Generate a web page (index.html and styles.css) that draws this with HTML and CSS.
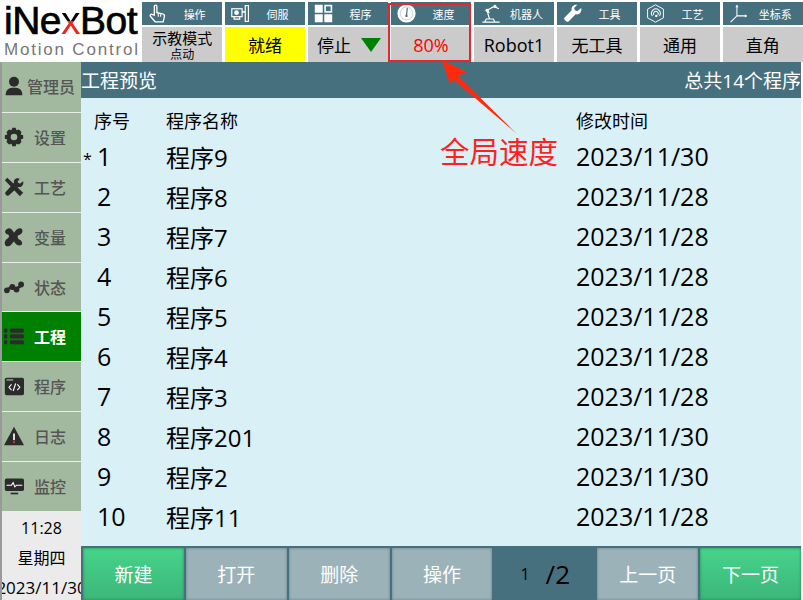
FILE: index.html
```html
<!DOCTYPE html>
<html>
<head>
  <meta charset="UTF-8">
  <meta name="viewport" content="width=device-width, initial-scale=1.0">
  <link rel="stylesheet" href="styles.css">
  <title>工程预览</title>
</head>
<body>
  <div class="app">
    <!-- top bar -->
    <div class="top">
      <div class="logo">
        <div class="logo-name">iNe<span class="logo-x">x</span>Bot</div>
        <div class="logo-sub">Motion Control</div>
      </div>
      <div class="cells">
        <div class="cell">
          <div class="cell-head">
            <svg class="head-icon" viewBox="0 0 24 24"><path d="M8 14V3a1.6 1.6 0 0 1 3.2 0v8l7 1.500c2 .5 3 1.500 2.500 3.500l-1.500 6.500H9l-6-7c-1-1.500 1-3.500 3-2z" fill="none" stroke="#fff" stroke-width="1.700"/><path d="M13 12v4M16 13v3" stroke="#fff" stroke-width="1.400"/></svg>
            <span>操作</span>
          </div>
          <div class="cell-val mode"><span>示教模式</span><small>点动</small></div>
        </div>
        <div class="cell">
          <div class="cell-head">
            <svg class="head-icon" viewBox="0 0 24 24"><rect x="1" y="6" width="13" height="10" fill="none" stroke="#fff" stroke-width="1.500"/><circle cx="7" cy="11" r="3" fill="#fff"/><path d="M4 16v3h7v-3" fill="none" stroke="#fff" stroke-width="1.500"/><rect x="18" y="2" width="4" height="20" fill="none" stroke="#fff" stroke-width="1.500"/><path d="M14 10h4" stroke="#fff" stroke-width="2"/></svg>
            <span>伺服</span>
          </div>
          <div class="cell-val ready">就绪</div>
        </div>
        <div class="cell">
          <div class="cell-head">
            <svg class="head-icon" viewBox="0 0 24 24"><path d="M1 1h10v10H1zM1 13h10v10H1zM13 13h10v10H13z" fill="#fff"/><rect x="14" y="2" width="8" height="8" fill="none" stroke="#fff" stroke-width="2"/></svg>
            <span>程序</span>
          </div>
          <div class="cell-val run">停止<svg class="run-arrow" viewBox="0 0 20 14"><path d="M0 0h20L10 14z" fill="#008000"/></svg></div>
        </div>
        <div class="cell">
          <div class="cell-head">
            <svg class="head-icon" viewBox="0 0 24 24"><circle cx="12" cy="12" r="11.500" fill="#fff"/><circle cx="12" cy="12" r="8" fill="none" stroke="#bcc9ce" stroke-width="1"/><path d="M12 14l1-9" stroke="#47707f" stroke-width="1.500"/><circle cx="12" cy="15" r="1.500" fill="#47707f"/></svg>
            <span>速度</span>
          </div>
          <div class="cell-val speed">80%</div>
        </div>
        <div class="cell">
          <div class="cell-head">
            <svg class="head-icon wide" viewBox="0 0 28 24"><path d="M3 23h22M6 23l2-4h9l2 4M12 19l-3-11 9-5 6 3M9 8l3 3" fill="none" stroke="#fff" stroke-width="1.500"/><circle cx="19" cy="3" r="2" fill="#fff"/><circle cx="9" cy="8" r="2" fill="#fff"/></svg>
            <span>机器人</span>
          </div>
          <div class="cell-val latin">Robot1</div>
        </div>
        <div class="cell">
          <div class="cell-head">
            <svg class="head-icon" viewBox="0 0 24 24"><path d="M23 5l-5 4-3-1-1-3 4-4c-4-1-8 2-7 7L2 17c-2 2 3 7 5 5l9-9c5 1 8-3 7-8z" fill="#fff"/></svg>
            <span>工具</span>
          </div>
          <div class="cell-val">无工具</div>
        </div>
        <div class="cell">
          <div class="cell-head">
            <svg class="head-icon" viewBox="0 0 24 24"><path d="M12 1l10 5.500v11L12 23 2 17.500v-11z" fill="none" stroke="#fff" stroke-width="1.200"/><path d="M8 15a5.500 5.500 0 1 1 9 0M10 14a3 3 0 1 1 5 0" fill="none" stroke="#fff" stroke-width="1.300"/><circle cx="13" cy="15" r="1.500" fill="#fff"/></svg>
            <span>工艺</span>
          </div>
          <div class="cell-val">通用</div>
        </div>
        <div class="cell">
          <div class="cell-head">
            <svg class="head-icon" viewBox="0 0 24 24"><path d="M10 2v13L2 23M10 15h12" fill="none" stroke="#fff" stroke-width="1.300"/><path d="M8 4l2-3 2 3zM20 13l3 2-3 2z" fill="#fff"/></svg>
            <span>坐标系</span>
          </div>
          <div class="cell-val">直角</div>
        </div>
      </div>
    </div>

    <div class="middle">
      <!-- left menu -->
      <div class="side">
        <div class="menu first">
          <svg class="menu-icon" viewBox="0 0 24 24"><circle cx="12" cy="7" r="6"/><path d="M2 23c0-7 4-9 10-9s10 2 10 9z"/></svg>
          <span class="label-admin">管理员</span>
        </div>
        <div class="menu">
          <svg class="menu-icon" viewBox="0 0 24 24"><path fill-rule="evenodd" d="M10 1h4l1 3 3-1 3 3-1 3 3 1v4l-3 1 1 3-3 3-3-1-1 3h-4l-1-3-3 1-3-3 1-3-3-1v-4l3-1-1-3 3-3 3 1zM12 8a4 4 0 1 0 0 8 4 4 0 0 0 0-8z"/></svg>
          <span>设置</span>
        </div>
        <div class="menu">
          <svg class="menu-icon" viewBox="0 0 24 24"><path d="M1 4l3-3 19 18-4 4z"/><path d="M23 5l-4 3-3-2 3-4c-4-2-8 1-7 5L2 18c-2 2 2 6 4 4L17 12c4 1 7-3 6-7z"/></svg>
          <span>工艺</span>
        </div>
        <div class="menu">
          <svg class="menu-icon" viewBox="0 0 24 24"><path d="M4 2c3-2 6 1 8 5 2-3 5-7 9-5 3 3 0 7-4 8-1 2-1 3 1 5 4 1 5 6 2 7-3 1-7-2-8-5-2 2-4 7-9 6-3-1-3-7 1-9 2-1 3-3 1-5-3 0-6-4-1-7z"/></svg>
          <span>变量</span>
        </div>
        <div class="menu">
          <svg class="menu-icon" viewBox="0 0 24 24"><path d="M3 17c3-5 6-5 9-3 3 1 6-2 9-4" fill="none" stroke="#2b2b2b" stroke-width="3"/><circle cx="3.500" cy="16" r="3.500"/><circle cx="10" cy="12" r="3.500"/><circle cx="15" cy="15" r="3.500"/><circle cx="20.500" cy="9" r="3.500"/></svg>
          <span>状态</span>
        </div>
        <div class="menu active">
          <svg class="menu-icon" viewBox="0 0 24 24"><rect x="0" y="3" width="4" height="5" rx="1"/><rect x="7" y="3" width="17" height="5" rx="2"/><rect x="0" y="10" width="4" height="5" rx="1"/><rect x="7" y="10" width="17" height="5" rx="2"/><rect x="0" y="17" width="4" height="5" rx="1"/><rect x="7" y="17" width="17" height="5" rx="2"/></svg>
          <span>工程</span>
        </div>
        <div class="menu">
          <svg class="menu-icon" viewBox="0 0 24 24"><rect x="1" y="2" width="23" height="21" rx="2"/><rect x="3" y="4" width="8" height="1.500" fill="#a2b9a0"/><path d="M9 10l-3 3.500 3 3.500M16 10l3 3.500-3 3.500M14 9l-3 9" fill="none" stroke="#fff" stroke-width="1.300"/></svg>
          <span>程序</span>
        </div>
        <div class="menu">
          <svg class="menu-icon" viewBox="0 0 24 24"><path d="M12 1l12 22H0z"/><rect x="11" y="9" width="2" height="8" fill="#fff"/><rect x="11" y="18.500" width="2" height="2" fill="#f33"/></svg>
          <span>日志</span>
        </div>
        <div class="menu">
          <svg class="menu-icon" viewBox="0 0 24 24"><rect x="1" y="3" width="23" height="15" rx="2"/><path d="M8 20h9v2H8z"/><path d="M3 11h6l2-3 2 5 2-2h7" fill="none" stroke="#fff" stroke-width="1.300"/></svg>
          <span>监控</span>
        </div>
        <div class="clock">
          <div>11:28</div>
          <div>星期四</div>
          <div class="clock-date">2023/11/30</div>
        </div>
      </div>

      <!-- project list -->
      <div class="main">
        <div class="title-bar">
          <span>工程预览</span>
          <span>总共14个程序</span>
        </div>
        <div class="list">
          <div class="row row-head"><i></i><span>序号</span><span>程序名称</span><span>修改时间</span></div>
          <div class="row"><i>*</i><span class="num">1</span><span>程序9</span><span class="num">2023/11/30</span></div>
          <div class="row"><i></i><span class="num">2</span><span>程序8</span><span class="num">2023/11/28</span></div>
          <div class="row"><i></i><span class="num">3</span><span>程序7</span><span class="num">2023/11/28</span></div>
          <div class="row"><i></i><span class="num">4</span><span>程序6</span><span class="num">2023/11/28</span></div>
          <div class="row"><i></i><span class="num">5</span><span>程序5</span><span class="num">2023/11/28</span></div>
          <div class="row"><i></i><span class="num">6</span><span>程序4</span><span class="num">2023/11/28</span></div>
          <div class="row"><i></i><span class="num">7</span><span>程序3</span><span class="num">2023/11/28</span></div>
          <div class="row"><i></i><span class="num">8</span><span>程序201</span><span class="num">2023/11/30</span></div>
          <div class="row"><i></i><span class="num">9</span><span>程序2</span><span class="num">2023/11/30</span></div>
          <div class="row"><i></i><span class="num">10</span><span>程序11</span><span class="num">2023/11/28</span></div>
        </div>
        <div class="bottom">
          <div class="btn green">新建</div>
          <div class="btn">打开</div>
          <div class="btn">删除</div>
          <div class="btn">操作</div>
          <div class="pager"><span class="page-no">1</span><span class="page-total">/2</span></div>
          <div class="btn">上一页</div>
          <div class="btn green">下一页</div>
        </div>
      </div>
    </div>

    <!-- annotation drawn over the screenshot -->
    <svg class="mark" viewBox="0 0 803 600">
      <rect x="389" y="4" width="81" height="57" fill="none" stroke="#e8262a" stroke-width="2"/>
      <path d="M442 60L467 72 458 76 517 134 454 80 450 84z" fill="#ff2a0d"/>
    </svg>
    <div class="mark-text">全局速度</div>
  </div>
</body>
</html>
```

FILE: styles.css
```css
* {
  box-sizing: border-box;
}

body {
  margin: 0;
  background-color: #fff;
  font-family: "Open Sans", "Noto Sans CJK SC", sans-serif;
  color: #000;
}

.app {
  position: relative;
  width: 803px;
  height: 600px;
  overflow: hidden;
}

/* top bar */
.top {
  display: flex;
  height: 62px;
}

.logo {
  width: 142px;
  padding: 5px 0 0 4px;
  flex: none;
}

.logo-name {
  font-family: "Liberation Sans", sans-serif;
  font-size: 39px;
  line-height: 31px;
  height: 32px;
  letter-spacing: -0.5px;
  color: #000;
  -webkit-text-stroke: 0.7px #000;
}

.logo-x {
  background: linear-gradient(#000 52%, #e8261c 52%);
  -webkit-background-clip: text;
  background-clip: text;
  color: transparent;
  -webkit-text-stroke: 0;
}

.logo-sub {
  font-family: "Liberation Sans", sans-serif;
  font-size: 17px;
  line-height: 20px;
  margin-top: 3px;
  letter-spacing: 1.8px;
  color: #777;
  white-space: nowrap;
}

.cells {
  flex: 1;
  display: grid;
  grid-template-columns: repeat(8, 1fr);
  column-gap: 2.7px;
  padding-top: 2px;
}

.cell {
  display: flex;
  flex-direction: column;
}

.cell-head {
  height: 23px;
  background-color: #47707f;
  color: #fff;
  font-size: 11px;
  display: flex;
  align-items: center;
  padding-left: 6px;
}

.cell-head span {
  flex: 1;
  text-align: center;
  white-space: nowrap;
}

.head-icon {
  width: 19px;
  height: 19px;
  flex: none;
}

.head-icon.wide {
  width: 22px;
  margin-right: -3px;
}

.cell-val {
  margin-top: 2px;
  flex: 1;
  background-color: #cbcbcb;
  font-size: 17px;
  display: flex;
  align-items: center;
  justify-content: center;
  white-space: nowrap;
}

.cell-val.latin,
.cell-val.speed {
  font-size: 18px;
}

.cell-val.mode {
  flex-direction: column;
  font-size: 15px;
  line-height: 18px;
  padding-top: 2px;
}

.cell-val.mode small {
  font-size: 12px;
  line-height: 15px;
}

.cell-val.ready {
  background-color: #ff0;
}

.cell-val.speed {
  color: #f00;
}

.run {
  justify-content: flex-start;
  padding-left: 9px;
}

.run-arrow {
  width: 20px;
  height: 14px;
  margin-left: 10px;
}

/* left menu and main */
.middle {
  display: flex;
  height: 538px;
}

.side {
  width: 81px;
  flex: none;
  border-left: 2px solid #9a9a9a;
  display: flex;
  flex-direction: column;
  background-color: #ebebeb;
}

.menu {
  height: 50px;
  background-color: #a2b9a0;
  border-top: 1px solid #e8efe8;
  color: #555;
  font-size: 16px;
  font-weight: 500;
  display: flex;
  align-items: center;
  padding: 0 0 2px 2px;
  gap: 10px;
  flex: none;
}

.menu.first {
  border-top: 0;
}

.menu-icon {
  width: 20px;
  height: 20px;
  flex: none;
  fill: #2b2b2b;
}

.label-admin {
  margin-left: -7px;
  white-space: nowrap;
}

.menu.active {
  background-color: #008000;
  color: #fff;
  font-weight: 700;
  margin-top: -1px;
}

.clock {
  flex: 1;
  display: flex;
  flex-direction: column;
  align-items: center;
  font-size: 16px;
  white-space: nowrap;
  overflow: hidden;
  padding-top: 3px;
  line-height: 29.5px;
}

.clock-date {
  font-size: 17px;
}

.main {
  flex: 1;
  display: flex;
  flex-direction: column;
  width: 720px;
  margin-right: 2px;
}

.title-bar {
  height: 36px;
  background-color: #47707f;
  color: #fff;
  font-size: 19px;
  display: flex;
  align-items: center;
  justify-content: space-between;
  white-space: nowrap;
}

.list {
  flex: 1;
  background-color: #daf0f7;
}

.row {
  display: grid;
  grid-template-columns: 16px 69px 410px 1fr;
  align-items: center;
  height: 40px;
  font-size: 24px;
  white-space: nowrap;
}

.row .num {
  font-size: 25px;
}

.row i {
  font-style: normal;
  font-size: 16px;
  padding: 6px 0 0 2px;
}

.row-head {
  height: 38px;
  padding-top: 6px;
  font-size: 18px;
}

.row-head span:first-of-type {
  margin-left: -3px;
}

.bottom {
  height: 54px;
  background-color: #47707f;
  padding: 2px 0 0 2px;
  display: flex;
  gap: 2px;
}

.btn {
  width: 101px;
  background-color: #9cb2b9;
  color: #fff;
  font-size: 19px;
  display: flex;
  align-items: center;
  justify-content: center;
  box-shadow: inset 0 0 3px rgba(60, 90, 100, 0.6);
}

.btn.green {
  background: linear-gradient(#46d48a, #3cb67a);
  box-shadow: inset 0 0 3px rgba(20, 120, 70, 0.8);
}

.pager {
  width: 103px;
  display: flex;
  align-items: center;
  padding-left: 26px;
  margin-right: -2px;
}

.page-no {
  font-size: 16px;
}

.page-total {
  font-size: 26px;
  margin-left: 16px;
}

/* annotation */
.mark {
  position: absolute;
  left: 0;
  top: 0;
  width: 803px;
  height: 600px;
  pointer-events: none;
}

.mark-text {
  position: absolute;
  left: 440px;
  top: 129px;
  font-family: "Noto Sans CJK SC", sans-serif;
  font-size: 29.5px;
  line-height: 42px;
  color: #ff1f1f;
  white-space: nowrap;
}
```
